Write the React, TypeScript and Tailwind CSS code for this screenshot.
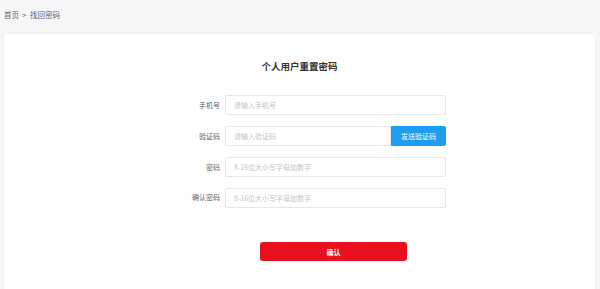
import React from "react";

const font = { fontFamily: '"Noto Sans CJK SC", "Noto Sans", sans-serif' };

function Row({ label, placeholder, action }: { label: string; placeholder: string; action?: string }) {
  return (
    <div className="flex items-center h-[20px] mb-[10.8px]">
      <label className="w-[80px] pr-[5px] text-right text-[7px] text-[#606266]">{label}</label>
      <div className="flex w-[221px] h-[20px]">
        <input
          placeholder={placeholder}
          className="flex-1 min-w-0 h-full border border-[#e4e6eb] rounded-[2px] pl-[8px] text-[7px] outline-none placeholder:text-[#c0c4cc]"
        />
        {action && (
          <button className="w-[55px] h-full bg-[#1f9df1] text-white text-[7px] rounded-r-[2px]">{action}</button>
        )}
      </div>
    </div>
  );
}

export default function App() {
  return (
    <div className="w-[600px] h-[289px] overflow-hidden bg-[#f6f6f8]" style={font}>
      <div className="h-[34px] pl-[4px] pt-[9px] text-[7.5px] text-[#606266]">首页 &nbsp;&gt;&nbsp; 找回密码</div>
      <div className="ml-[4px] w-[591px] h-[270px] bg-white rounded-[4px] shadow-[0_0_4px_rgba(0,0,0,0.04)]">
        <h1 className="pt-[25px] text-center text-[9.5px] font-bold text-[#333]">个人用户重置密码</h1>
        <div className="ml-[141px] mt-[22px]">
          <Row label="手机号" placeholder="请输入手机号" />
          <Row label="验证码" placeholder="请输入验证码" action="发送验证码" />
          <Row label="密码" placeholder="8-16位大小写字母加数字" />
          <Row label="确认密码" placeholder="8-16位大小写字母加数字" />
          <button className="mt-[24px] ml-[115px] w-[147px] h-[19px] rounded-[3px] bg-[#e8101f] text-white text-[7px] font-bold">
            确认
          </button>
        </div>
      </div>
    </div>
  );
}
